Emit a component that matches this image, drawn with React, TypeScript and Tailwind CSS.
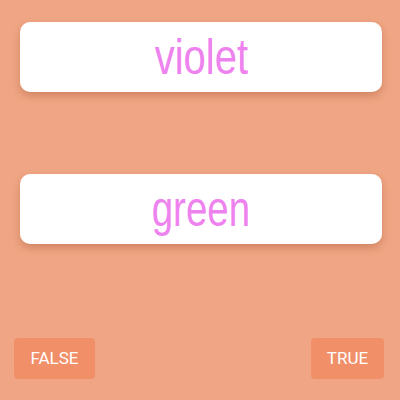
export default function App() {
  return (
    <div className="flex h-[400px] w-[400px] flex-col bg-[#f0a684]">
      <div className="ml-5 mt-[22px] flex h-[70px] w-[362px] items-center justify-center rounded-[10px] bg-white shadow-[0_4px_8px_rgba(170,90,60,0.45)]">
        <span className="inline-block origin-center scale-x-[0.8] font-['Liberation_Sans',sans-serif] text-[50px] leading-none text-[#ee82ee]">
          violet
        </span>
      </div>
      <div className="ml-5 mt-[82px] flex h-[70px] w-[362px] items-center justify-center rounded-[10px] bg-white shadow-[0_4px_8px_rgba(170,90,60,0.45)]">
        <span className="inline-block origin-center scale-x-[0.77] font-['Liberation_Sans',sans-serif] text-[50px] leading-none text-[#ee82ee]">
          green
        </span>
      </div>
      <div className="mt-[94px] flex justify-between pl-[14px] pr-4">
        <button
          type="button"
          className="flex h-[41px] w-[81px] items-center justify-center rounded bg-[#f18f69] font-['Roboto',sans-serif] text-[17px] text-white"
        >
          FALSE
        </button>
        <button
          type="button"
          className="flex h-[41px] w-[73px] items-center justify-center rounded bg-[#f18f69] font-['Roboto',sans-serif] text-[17px] text-white"
        >
          TRUE
        </button>
      </div>
    </div>
  );
}
